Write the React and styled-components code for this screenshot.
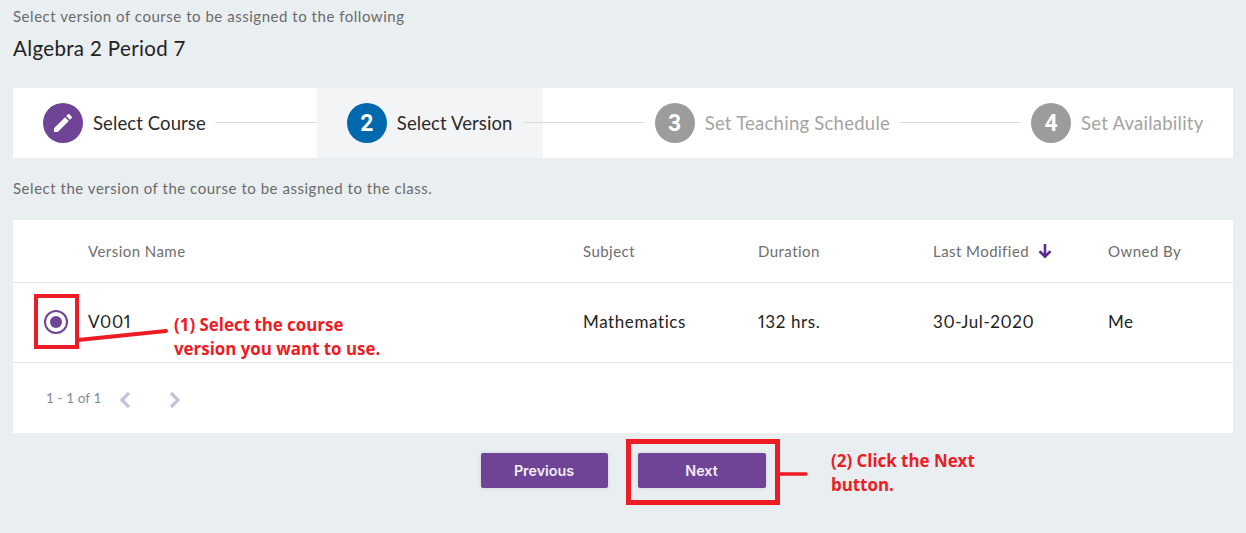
import React from "react";
import styled, { createGlobalStyle } from "styled-components";
import { MdEdit } from "react-icons/md";

const Global = createGlobalStyle`
  html, body { margin: 0; padding: 0; background: #e9eef1; }
  body { font-family: "Lato", "Open Sans", sans-serif; overflow: hidden; }
`;

const Page = styled.div`
  position: relative;
  width: 1246px;
  height: 533px;
  padding: 0 13px;
  box-sizing: border-box;
  background: #e9eef1;
  overflow: hidden;
`;
const Intro = styled.div`
  height: 88px;
  padding-top: 7px;
  box-sizing: border-box;
`;
const Hint = styled.div`
  font-size: 15px;
  letter-spacing: 0.53px;
  line-height: 18px;
  color: #6b6b6b;
`;
const Title = styled.h1`
  margin: 11px 0 0;
  font-size: 20.5px;
  letter-spacing: 0.35px;
  line-height: 24px;
  font-weight: 400;
  color: #222;
`;
const Stepper = styled.div`
  display: flex;
  align-items: center;
  gap: 10px;
  height: 70px;
  padding: 0 30px;
  background: #fff;
`;
const Step = styled.div`
  position: relative;
  display: flex;
  align-items: center;
  gap: 10px;
  &::before {
    content: "";
    display: ${(p) => (p.$active ? "block" : "none")};
    position: absolute;
    top: -15px;
    bottom: -15px;
    left: -30px;
    right: -30px;
    background: #f3f4f5;
  }
`;
const Badge = styled.div`
  position: relative;
  width: 40px;
  height: 40px;
  border-radius: 50%;
  display: flex;
  align-items: center;
  justify-content: center;
  color: #fff;
  font-size: 23px;
  font-weight: 700;
  font-family: "Roboto", sans-serif;
  background: ${(p) => p.$bg};
`;
const StepLabel = styled.span`
  position: relative;
  width: ${(p) => p.$w}px;
  white-space: nowrap;
  font-size: 18.5px;
  letter-spacing: ${(p) => (p.$muted ? "0.25px" : "0.1px")};
  color: ${(p) => (p.$muted ? "#a3a3a3" : "#2a2a2a")};
`;
const Connector = styled.div`
  position: relative;
  flex: 1;
  height: 1px;
  top: -1px;
  background: #dcdcdc;
`;
const Lead = styled.p`
  margin: 0;
  height: 62px;
  padding-top: 21px;
  box-sizing: border-box;
  font-size: 15px;
  letter-spacing: 0.53px;
  line-height: 18px;
  color: #6b6b6b;
`;
const Card = styled.div`
  background: #fff;
  height: 213px;
`;
const Row = styled.div`
  display: grid;
  grid-template-columns: 75px 495px 175px 175px 175px 1fr;
  align-items: center;
  box-sizing: border-box;
  height: ${(p) => p.$h + 1}px;
  padding-bottom: ${(p) => p.$lift}px;
  border-bottom: 1px solid #e2e2e2;
`;
const Th = styled.div`
  display: flex;
  align-items: center;
  gap: 8px;
  font-size: 15px;
  letter-spacing: 0.45px;
  color: #6e6e6e;
`;
const Td = styled.div`
  font-size: 17px;
  letter-spacing: 0.6px;
  font-feature-settings: "pnum";
  color: #222;
`;
const RadioCell = styled.div`
  display: flex;
  padding-left: 31px;
`;
const Radio = styled.div`
  width: 24px;
  height: 24px;
  box-sizing: border-box;
  border: 2px solid #6f4496;
  border-radius: 50%;
  display: flex;
  align-items: center;
  justify-content: center;
  &::after {
    content: "";
    width: 12px;
    height: 12px;
    border-radius: 50%;
    background: #6f4496;
  }
`;
const Pager = styled.div`
  display: flex;
  align-items: center;
  height: 70px;
  padding: 3px 0 0 33px;
  box-sizing: border-box;
`;
const PagerText = styled.span`
  width: 68px;
  font-size: 13.5px;
  letter-spacing: 0.1px;
  color: #7d8a96;
  position: relative;
  top: -2px;
`;
const ChevronButton = styled.span`
  display: flex;
  width: 50px;
  height: 24px;
  color: #c9bfdd;
`;
const Actions = styled.div`
  display: flex;
  justify-content: center;
  gap: 30px;
  margin-top: 20px;
`;
const Button = styled.button`
  width: ${(p) => p.$w}px;
  height: 35px;
  padding: 0;
  border: 0;
  border-radius: 2px;
  background: #6f4496;
  color: #f2eef7;
  font-family: "Inter", "Open Sans", sans-serif;
  font-size: 14.3px;
  font-weight: 600;
  box-shadow: 0 0 4px rgba(0, 0, 0, 0.12);
`;
const Frame = styled.div`
  position: absolute;
  left: ${(p) => p.$x}px;
  top: ${(p) => p.$y}px;
  width: ${(p) => p.$w}px;
  height: ${(p) => p.$h}px;
  box-sizing: border-box;
  border: ${(p) => p.$b}px solid #ed1c24;
`;
const Note = styled.div`
  position: absolute;
  left: ${(p) => p.$x}px;
  top: ${(p) => p.$y}px;
  font-family: "Open Sans", sans-serif;
  font-weight: 700;
  font-size: 16.9px;
  line-height: ${(p) => p.$lh}px;
  color: #ed1c24;
  white-space: nowrap;
`;
const Leader = styled.svg`
  position: absolute;
  left: 0;
  top: 0;
  pointer-events: none;
`;

const Chevron = ({ flip }) => (
  <svg width="24" height="24" viewBox="0 0 24 24" fill="none" stroke="currentColor" strokeWidth="3.2">
    <path d={flip ? "M7 5l7 7-7 7" : "M15 5l-7 7 7 7"} />
  </svg>
);

const SortArrow = () => (
  <svg width="16" height="16" viewBox="0 0 16 16" fill="none" stroke="#5c2d91" strokeWidth="2.6">
    <path d="M8 1v12.5M2.5 8.2L8 13.6l5.5-5.4" />
  </svg>
);

export default function App() {
  return (
    <Page>
      <Global />
      <Intro>
        <Hint>Select version of course to be assigned to the following</Hint>
        <Title>Algebra 2 Period 7</Title>
      </Intro>
      <Stepper>
        <Step>
          <Badge $bg="#6f4496"><MdEdit size={24} /></Badge>
          <StepLabel $w={112}>Select Course</StepLabel>
        </Step>
        <Connector />
        <Step $active>
          <Badge $bg="#0069ad">2</Badge>
          <StepLabel $w={116}>Select Version</StepLabel>
        </Step>
        <Connector />
        <Step>
          <Badge $bg="#9c9c9c">3</Badge>
          <StepLabel $w={184.5} $muted>Set Teaching Schedule</StepLabel>
        </Step>
        <Connector />
        <Step>
          <Badge $bg="#9c9c9c">4</Badge>
          <StepLabel $w={122} $muted>Set Availability</StepLabel>
        </Step>
      </Stepper>
      <Lead>Select the version of the course to be assigned to the class.</Lead>
      <Card>
        <Row $h={62} $lift={1}>
          <span />
          <Th>Version Name</Th>
          <Th>Subject</Th>
          <Th>Duration</Th>
          <Th>
            Last Modified
            <SortArrow />
          </Th>
          <Th>Owned By</Th>
        </Row>
        <Row $h={79} $lift={2}>
          <RadioCell><Radio /></RadioCell>
          <Td>V001</Td>
          <Td>Mathematics</Td>
          <Td>132 hrs.</Td>
          <Td>30-Jul-2020</Td>
          <Td>Me</Td>
        </Row>
        <Pager>
          <PagerText>1 - 1 of 1</PagerText>
          <ChevronButton><Chevron /></ChevronButton>
          <ChevronButton><Chevron flip /></ChevronButton>
        </Pager>
      </Card>
      <Actions>
        <Button $w={127}>Previous</Button>
        <Button $w={128}>Next</Button>
      </Actions>
      <Frame $x={34} $y={294} $w={45} $h={55} $b={4} />
      <Frame $x={626} $y={439} $w={154} $h={66} $b={5} />
      <Leader width="1246" height="533">
        <path d="M78 340L166 331" stroke="#ed1c24" strokeWidth="4" strokeLinecap="round" />
        <path d="M780 474H806" stroke="#ed1c24" strokeWidth="3.5" strokeLinecap="round" />
      </Leader>
      <Note $x={174} $y={313} $lh={24}>(1) Select the course<br />version you want to use.</Note>
      <Note $x={831} $y={449} $lh={24}>(2) Click the Next<br />button.</Note>
    </Page>
  );
}
